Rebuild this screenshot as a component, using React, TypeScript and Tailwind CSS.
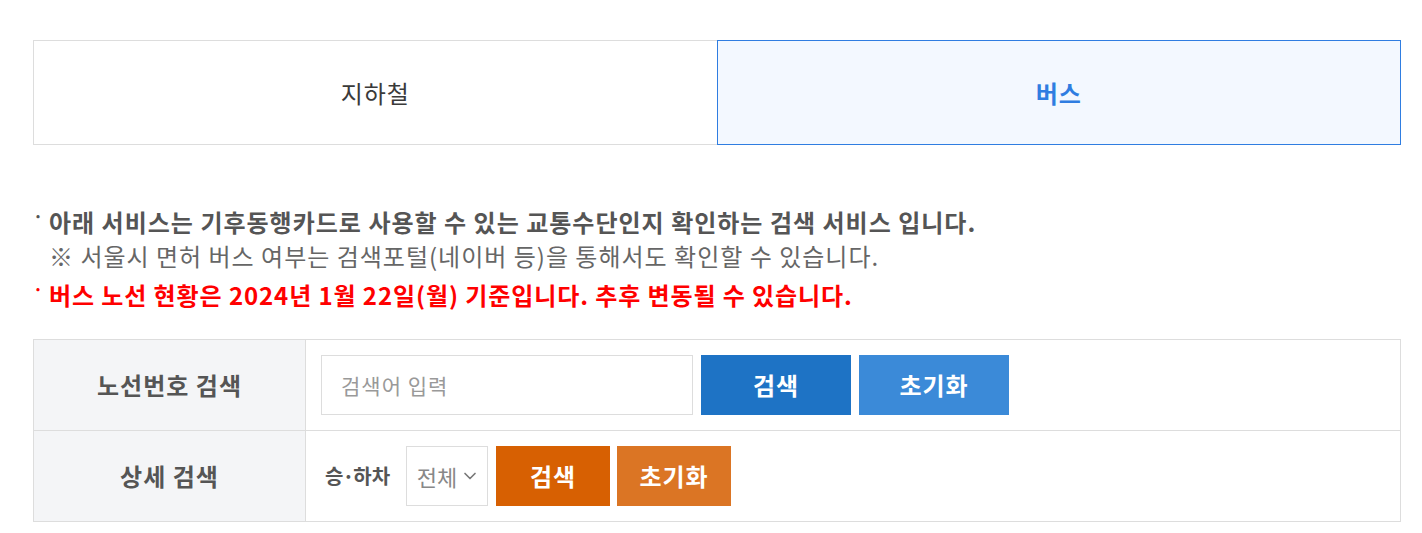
import { ChevronDown } from "lucide-react";

const font = { fontFamily: '"Noto Sans CJK KR", "Noto Sans", sans-serif' };

export default function App() {
  return (
    <div className="min-h-screen bg-white pl-[33px] pr-[21px] pt-[40px]" style={font}>
      <div className="flex h-[105px] w-[1368px]">
        <button className="flex flex-1 items-center justify-center border border-r-0 border-[#dddddd] bg-white text-[24px] tracking-[1px] text-[#3a3a3a]">
          지하철
        </button>
        <button className="flex flex-1 items-center justify-center border border-[#2f7de1] bg-[#f3f8ff] text-[24px] font-bold tracking-[1px] text-[#2f7de1]">
          버스
        </button>
      </div>

      <ul className="mt-[59px] flex flex-col tracking-[1px]">
        <li className="flex h-[36px] items-center text-[24px] font-bold text-[#555555]">
          <span className="mr-[5px] w-[11px] -translate-y-[6px] text-[17px]">·</span>
          아래 서비스는 기후동행카드로 사용할 수 있는 교통수단인지 확인하는 검색 서비스 입니다.
        </li>
        <li className="flex h-[32px] items-center pl-[16px] text-[24px] text-[#666666]">
          ※ 서울시 면허 버스 여부는 검색포털(네이버 등)을 통해서도 확인할 수 있습니다.
        </li>
        <li className="mt-[5px] flex h-[36px] items-center text-[24px] font-bold tracking-[0.9px] text-[#ff0000]">
          <span className="mr-[5px] w-[11px] -translate-y-[6px] text-[17px]">·</span>
          버스 노선 현황은 2024년 1월 22일(월) 기준입니다. 추후 변동될 수 있습니다.
        </li>
      </ul>

      <div className="mt-[26px] w-[1368px] border-t border-[#dddddd] tracking-[1px]">
        <div className="flex h-[91px] border-b border-[#dddddd]">
          <div className="flex w-[273px] items-center justify-center border-x border-[#dddddd] bg-[#f4f5f7] text-[24px] font-bold text-[#555555]">
            노선번호 검색
          </div>
          <div className="flex flex-1 items-center gap-[8px] border-r border-[#dddddd] pl-[15px]">
            <input
              className="h-[60px] w-[372px] border border-[#dddddd] px-[19px] text-[21px] tracking-[1px] text-[#333333] outline-none placeholder:text-[#999999]"
              placeholder="검색어 입력"
            />
            <button className="h-[60px] w-[150px] bg-[#1e73c5] text-[24px] font-bold tracking-[1px] text-white">검색</button>
            <button className="h-[60px] w-[150px] bg-[#3b8ad8] text-[24px] font-bold tracking-[1px] text-white">초기화</button>
          </div>
        </div>
        <div className="flex h-[91px] border-b border-[#dddddd]">
          <div className="flex w-[273px] items-center justify-center border-x border-[#dddddd] bg-[#f4f5f7] text-[24px] font-bold text-[#555555]">
            상세 검색
          </div>
          <div className="flex flex-1 items-center border-r border-[#dddddd] pl-[19px]">
            <span className="mr-[16px] text-[20px] font-bold tracking-normal text-[#555555]">
              승<span className="mx-[-1px]">·</span>하차
            </span>
            <div className="flex h-[60px] w-[82px] items-center justify-center gap-[3px] border border-[#dddddd] pl-[3px] text-[22px] tracking-normal text-[#888888]">
              전체
              <ChevronDown size={20} strokeWidth={2} className="text-[#777777]" />
            </div>
            <button className="ml-[8px] h-[60px] w-[114px] bg-[#d76002] text-[24px] font-bold tracking-[1px] text-white">검색</button>
            <button className="ml-[7px] h-[60px] w-[114px] bg-[#db7524] text-[24px] font-bold tracking-[1px] text-white">초기화</button>
          </div>
        </div>
      </div>
    </div>
  );
}
